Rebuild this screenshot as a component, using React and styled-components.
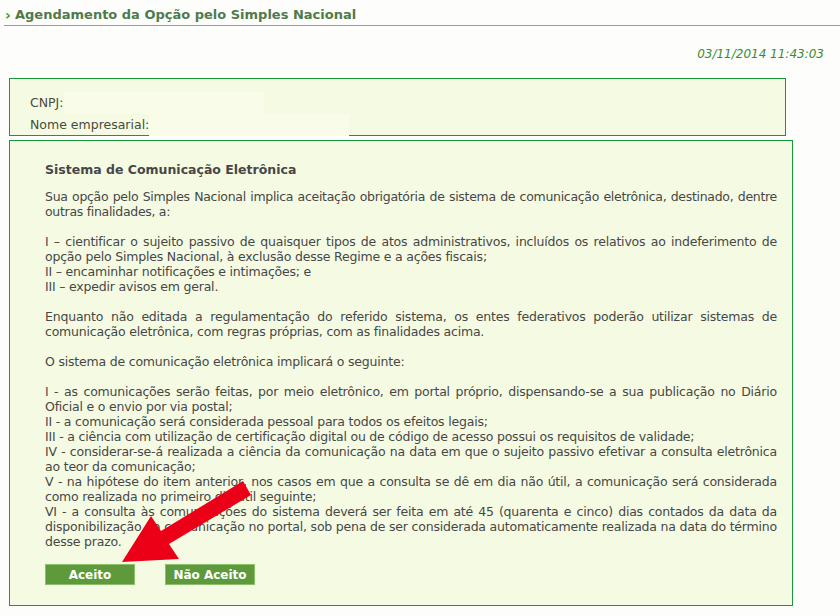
import React from 'react';
import styled, { createGlobalStyle } from 'styled-components';

const GlobalStyle = createGlobalStyle`
  html, body {
    margin: 0;
    padding: 0;
    background: #fdfdfb;
  }
  body {
    font-family: "DejaVu Sans", Verdana, sans-serif;
    font-size: 12.5px;
    color: #474747;
  }
`;

const Page = styled.div`
  position: relative;
  width: 840px;
  height: 616px;
  overflow: hidden;
`;

const TitleBar = styled.div`
  margin-left: 4px;
  height: 26px;
  border-bottom: 1px solid #7fae86;
  display: flex;
  align-items: center;
  gap: 3px;
  padding-top: 4px;
  box-sizing: border-box;
`;

const TitleMark = styled.span`
  color: #3f9a2c;
  font-weight: bold;
  font-size: 14px;
  width: 8px;
  text-align: center;
`;

const TitleText = styled.h1`
  margin: 0;
  font-size: 13px;
  font-weight: bold;
  color: #4f7a4c;
`;

const DateLine = styled.div`
  text-align: right;
  padding-right: 16px;
  margin-top: 20px;
  font-size: 12px;
  font-style: italic;
  color: #3d8a34;
  height: 16px;
  line-height: 16px;
`;

const Box = styled.div`
  margin-left: 9px;
  width: ${(p) => p.$w}px;
  border: 1px solid #17993a;
  background: #f5fbe3;
  box-sizing: border-box;
`;

const InfoBox = styled(Box)`
  margin-top: 16px;
  height: 58px;
  padding: 13px 0 0 20px;
`;

const InfoRow = styled.div`
  display: flex;
  height: 22px;
  line-height: 22px;
  color: #4a4a3a;
`;

const Masked = styled.span`
  display: inline-block;
  width: ${(p) => p.$w}px;
  background: #f8fce8;
`;

const TermsBox = styled(Box)`
  margin-top: 4px;
  height: 466px;
  padding: 21px 15px 0 35px;
`;

const Heading = styled.h2`
  margin: 0 0 12px;
  font-size: 12.5px;
  font-weight: bold;
  color: #474747;
  line-height: 15px;
`;

const Para = styled.p`
  margin: 0 0 15px;
  line-height: 15px;
  text-align: justify;
  letter-spacing: ${(p) => (p.$tight ? -0.3 : -0.2)}px;
`;

const Buttons = styled.div`
  display: flex;
  gap: 30px;
  margin-top: 9px;
`;

const Button = styled.button`
  width: 90px;
  height: 21px;
  padding: 0;
  border: 1px solid #8cc06d;
  background: #5e9a3c;
  color: #fff;
  font-family: "DejaVu Sans", Verdana, sans-serif;
  font-size: 12px;
  font-weight: bold;
`;

const Pointer = styled.svg`
  position: absolute;
  left: 0;
  top: 0;
  pointer-events: none;
`;

export default function App() {
  return (
    <Page>
      <GlobalStyle />
      <TitleBar>
        <TitleMark>›</TitleMark>
        <TitleText>Agendamento da Opção pelo Simples Nacional</TitleText>
      </TitleBar>
      <DateLine>03/11/2014 11:43:03</DateLine>

      <InfoBox $w={777}>
        <InfoRow>CNPJ:<Masked $w={200} /></InfoRow>
        <InfoRow>Nome empresarial:<Masked $w={200} /></InfoRow>
      </InfoBox>

      <TermsBox $w={784}>
        <Heading>Sistema de Comunicação Eletrônica</Heading>
        <Para $tight>
          Sua opção pelo Simples Nacional implica aceitação obrigatória de sistema de comunicação eletrônica, destinado, dentre outras finalidades, a:
        </Para>
        <Para>
          I – cientificar o sujeito passivo de quaisquer tipos de atos administrativos, incluídos os relativos ao indeferimento de opção pelo Simples Nacional, à exclusão desse Regime e a ações fiscais;<br />
          II – encaminhar notificações e intimações; e<br />
          III – expedir avisos em geral.
        </Para>
        <Para>
          Enquanto não editada a regulamentação do referido sistema, os entes federativos poderão utilizar sistemas de comunicação eletrônica, com regras próprias, com as finalidades acima.
        </Para>
        <Para>O sistema de comunicação eletrônica implicará o seguinte:</Para>
        <Para>
          I - as comunicações serão feitas, por meio eletrônico, em portal próprio, dispensando-se a sua publicação no Diário Oficial e o envio por via postal;<br />
          II - a comunicação será considerada pessoal para todos os efeitos legais;<br />
          III - a ciência com utilização de certificação digital ou de código de acesso possui os requisitos de validade;<br />
          IV - considerar-se-á realizada a ciência da comunicação na data em que o sujeito passivo efetivar a consulta eletrônica ao teor da comunicação;<br />
          V - na hipótese do item anterior, nos casos em que a consulta se dê em dia não útil, a comunicação será considerada como realizada no primeiro dia útil seguinte;<br />
          VI - a consulta às comunicações do sistema deverá ser feita em até 45 (quarenta e cinco) dias contados da data da disponibilização da comunicação no portal, sob pena de ser considerada automaticamente realizada na data do término desse prazo.
        </Para>
        <Buttons>
          <Button>Aceito</Button>
          <Button>Não Aceito</Button>
        </Buttons>
      </TermsBox>

      <Pointer width="840" height="616" viewBox="0 0 840 616">
        <polygon
          points="243,481 251,495 169,544 179,559 122,562 151,516 161,531"
          fill="#ec0017"
        />
      </Pointer>
    </Page>
  );
}
